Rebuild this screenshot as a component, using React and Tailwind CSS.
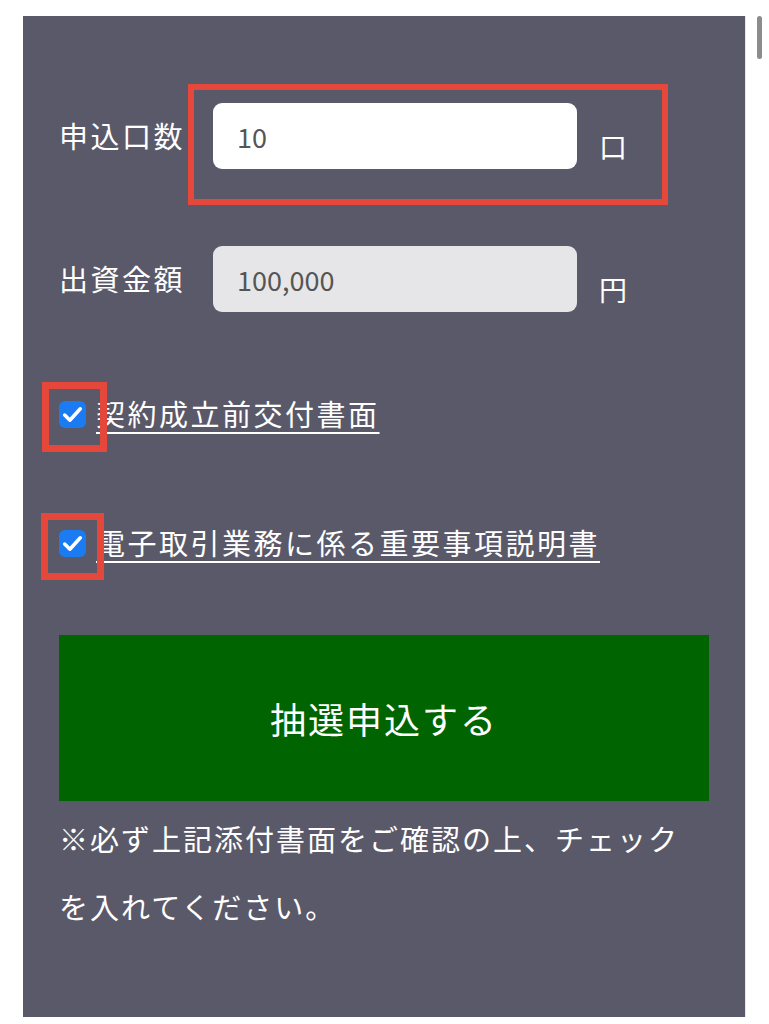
import React from "react";

const Check = () => (
  <span className="flex h-[27px] w-[27px] shrink-0 items-center justify-center rounded-[6px] bg-[#1a7bf2]">
    <svg viewBox="0 0 24 24" className="h-[25px] w-[25px]" fill="none" stroke="#fff" strokeWidth="3.4" strokeLinecap="round" strokeLinejoin="round">
      <path d="M4.5 12.5l5 5L19.5 6.5" />
    </svg>
  </span>
);

const Field = ({ label, value, unit, disabled, marked }) => (
  <div className="flex items-center">
    <div className="w-[154px] shrink-0 text-[29px] tracking-[2.5px] text-white">{label}</div>
    <div className="relative flex items-center">
      <input
        readOnly
        value={value}
        className={`h-[66px] w-[364px] rounded-[9px] pl-[24px] text-[27px] text-[#555] outline-none ${
          disabled ? "bg-[#e6e6e8]" : "bg-white"
        }`}
      />
      <span className="ml-[22px] mt-[20px] text-[28px] text-white">{unit}</span>
      {marked && (
        <div className="absolute left-[-25px] top-[-19px] h-[121px] w-[480px] border-[6px] border-[#e5483a]" />
      )}
    </div>
  </div>
);

const Doc = ({ text, box }) => (
  <label className="relative flex h-[40px] items-center">
    <Check />
    <span className="ml-[10px] text-[29px] tracking-[2.5px] text-white underline decoration-[2px] underline-offset-[6px]">
      {text}
    </span>
    <div className={`absolute border-[7px] border-[#e5483a] ${box}`} />
  </label>
);

export default function App() {
  return (
    <div className="relative min-h-[1024px] w-full bg-white font-['Noto_Sans_CJK_JP',sans-serif]">
      <div className="absolute left-[757px] top-0 h-[43px] w-[5px] rounded-full bg-[#8c8c8c]" />
      <div className="mx-[23px] mt-[16px] h-[1001px] border-r border-[#e8e8ec] bg-[#5a5969] px-[36px] pt-[87px]">
        <Field label="申込口数" value="10" unit="口" marked />
        <div className="mt-[77px]">
          <Field label="出資金額" value="100,000" unit="円" disabled />
        </div>
        <div className="mt-[82px]">
          <Doc text="契約成立前交付書面" box="left-[-17px] top-[-12px] h-[70px] w-[65px]" />
        </div>
        <div className="mt-[89px]">
          <Doc text="電子取引業務に係る重要事項説明書" box="left-[-18px] top-[-10px] h-[67px] w-[63px]" />
        </div>
        <button
          type="button"
          className="mt-[72px] flex h-[166px] w-full items-center justify-center bg-[#006400] text-[36px] tracking-[2px] text-white"
        >
          抽選申込する
        </button>
        <p className="mt-[3px] text-[29px] leading-[68px] tracking-[2px] text-white">
          ※必ず上記添付書面をご確認の上、チェックを入れてください。
        </p>
      </div>
    </div>
  );
}
